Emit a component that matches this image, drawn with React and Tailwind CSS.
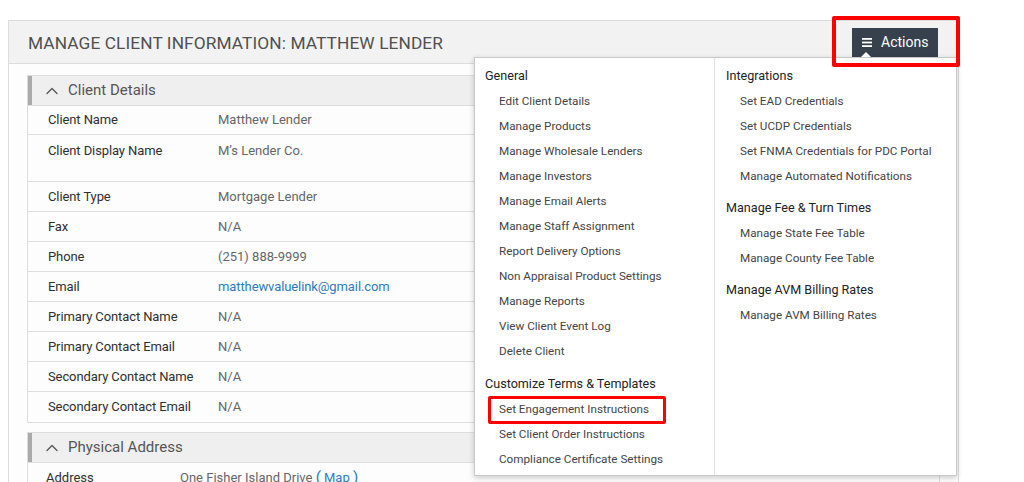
import React from "react";
import { ChevronUp } from "lucide-react";

const rows = [
  { label: "Client Name", value: "Matthew Lender" },
  { label: "Client Display Name", value: "M’s Lender Co.", tall: true },
  { label: "Client Type", value: "Mortgage Lender" },
  { label: "Fax", value: "N/A" },
  { label: "Phone", value: "(251) 888-9999" },
  { label: "Email", value: "matthewvaluelink@gmail.com", link: true },
  { label: "Primary Contact Name", value: "N/A" },
  { label: "Primary Contact Email", value: "N/A" },
  { label: "Secondary Contact Name", value: "N/A" },
  { label: "Secondary Contact Email", value: "N/A" },
];

const generalItems = [
  "Edit Client Details",
  "Manage Products",
  "Manage Wholesale Lenders",
  "Manage Investors",
  "Manage Email Alerts",
  "Manage Staff Assignment",
  "Report Delivery Options",
  "Non Appraisal Product Settings",
  "Manage Reports",
  "View Client Event Log",
  "Delete Client",
];

const termsItems = [
  "Set Engagement Instructions",
  "Set Client Order Instructions",
  "Compliance Certificate Settings",
];

const MenuHeading = ({ children, className = "" }) => (
  <div className={`h-[26px] flex items-center text-[12.6px] text-[#222] ${className}`}>
    {children}
  </div>
);

const MenuItem = ({ children }) => (
  <div className="h-[25px] flex items-center pl-[14px] text-[11.7px] text-[#444]">
    {children}
  </div>
);

const SectionHeader = ({ title }) => (
  <div className="h-[29px] flex items-center bg-[#efefef] border-l-4 border-[#aaaaaa] pl-[10px]">
    <ChevronUp size={20} strokeWidth={1.5} className="text-[#555]" />
    <span className="ml-[6px] text-[15px] text-[#555]">{title}</span>
  </div>
);

const ActionsMenu = () => (
  <div className="absolute left-[474px] top-[57px] w-[483px] h-[419px] bg-white border border-[#c8c8c8] shadow-[0_2px_6px_rgba(0,0,0,0.2)] flex">
    <div className="w-[240px] border-r border-[#e2e2e2] pl-[10px] pt-[5px]">
      <MenuHeading>General</MenuHeading>
      {generalItems.map((item) => (
        <MenuItem key={item}>{item}</MenuItem>
      ))}
      <MenuHeading className="mt-[7px]">Customize Terms &amp; Templates</MenuHeading>
      {termsItems.map((item) => (
        <MenuItem key={item}>{item}</MenuItem>
      ))}
    </div>
    <div className="flex-1 pl-[11px] pt-[5px]">
      <MenuHeading>Integrations</MenuHeading>
      <MenuItem>Set EAD Credentials</MenuItem>
      <MenuItem>Set UCDP Credentials</MenuItem>
      <MenuItem>Set FNMA Credentials for PDC Portal</MenuItem>
      <MenuItem>Manage Automated Notifications</MenuItem>
      <MenuHeading className="mt-[6px]">Manage Fee &amp; Turn Times</MenuHeading>
      <MenuItem>Manage State Fee Table</MenuItem>
      <MenuItem>Manage County Fee Table</MenuItem>
      <MenuHeading className="mt-[6px]">Manage AVM Billing Rates</MenuHeading>
      <MenuItem>Manage AVM Billing Rates</MenuItem>
    </div>
  </div>
);

export default function App() {
  return (
    <div className="relative w-[1024px] h-[482px] overflow-hidden bg-white pt-[20px] pl-[8px] font-['Roboto',sans-serif]">
      <div className="w-[951px] h-[480px] border border-[#dddddd] bg-[#fdfdfd]">
        {/* page header */}
        <div className="h-[43px] bg-[#f2f2f2] border-b border-[#dddddd] flex items-center justify-between pl-[19px] pr-[20px]">
          <h1 className="mt-[3px] text-[17.3px] text-[#505050] tracking-[0.1px]">
            MANAGE CLIENT INFORMATION: MATTHEW LENDER
          </h1>
          <button className="h-[30px] w-[86px] bg-[#36414d] flex items-center pl-[10px] text-white text-[14px] mt-[1px]">
            <svg width="10" height="9" viewBox="0 0 10 9" className="mr-[9px]">
              <rect y="0" width="10" height="1.8" fill="#fff" />
              <rect y="3.6" width="10" height="1.8" fill="#fff" />
              <rect y="7.2" width="10" height="1.8" fill="#fff" />
            </svg>
            Actions
          </button>
        </div>

        {/* body */}
        <div className="px-[18px] pt-[11px]">
          <div className="border border-[#dddddd] bg-[#fdfdfd]">
            <SectionHeader title="Client Details" />
            {rows.map((r, i) => (
              <div
                key={r.label}
                className={`flex text-[13px] border-[#dddddd] ${i === 0 ? "border-t" : ""} ${
                  i < rows.length - 1 ? "border-b" : ""
                } ${r.tall ? "h-[47px] items-start pt-[6px]" : "h-[30px] items-center"}`}
              >
                <div className="w-[190px] pl-[20px] text-[#2f2f2f] tracking-[-0.1px]">{r.label}</div>
                <div className={r.link ? "text-[#2b7bbf] tracking-[-0.1px]" : "text-[#666]"}>{r.value}</div>
              </div>
            ))}
          </div>

          <div className="mt-[9px] border border-[#dddddd]">
            <SectionHeader title="Physical Address" />
            <div className="flex items-center h-[30px] text-[13px] border-t border-[#dddddd]">
              <div className="w-[152px] pl-[18px] text-[#2f2f2f]">Address</div>
              <div className="text-[#666]">
                One Fisher Island Drive{" "}
                <span className="text-[#2b7bbf]">
                  <span className="text-[15px]">(</span> Map <span className="text-[15px]">)</span>
                </span>
              </div>
            </div>
          </div>
        </div>
      </div>

      <ActionsMenu />

      {/* dropdown caret */}
      <div className="absolute left-[861px] top-[52px] w-0 h-0 border-x-[5px] border-x-transparent border-b-[5px] border-b-white" />

      {/* red highlight annotations */}
      <div className="absolute left-[832px] top-[16px] w-[128px] h-[51px] border-4 border-[#ff0000] rounded-[2px]" />
      <div className="absolute left-[488px] top-[396px] w-[178px] h-[28px] border-[3px] border-[#ff0000] rounded-[2px]" />
    </div>
  );
}
